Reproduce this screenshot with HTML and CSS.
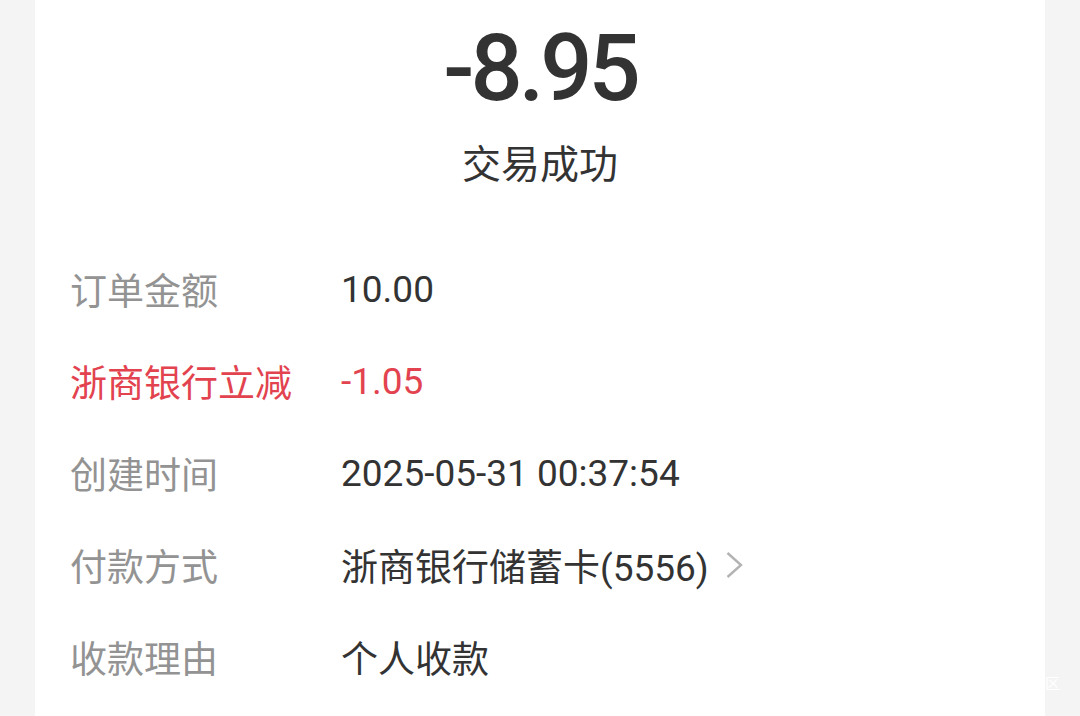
FILE: index.html
```html
<!DOCTYPE html>
<html lang="zh-CN">
<head>
    <meta charset="UTF-8">
    <meta name="viewport" content="width=device-width, initial-scale=1.0">
    <title>账单详情</title>
    <link rel="stylesheet" href="styles.css">
</head>
<body>
    <main class="card">
        <section class="summary">
            <p class="amount">-8.95</p>
            <p class="status">交易成功</p>
        </section>
        <section class="details">
            <div class="row">
                <span class="label">订单金额</span>
                <span class="value">10.00</span>
            </div>
            <div class="row discount">
                <span class="label">浙商银行立减</span>
                <span class="value">-1.05</span>
            </div>
            <div class="row">
                <span class="label">创建时间</span>
                <span class="value">2025-05-31 00:37:54</span>
            </div>
            <div class="row">
                <span class="label">付款方式</span>
                <span class="value link">浙商银行储蓄卡(5556)
                    <svg class="arrow" viewBox="0 0 17 26" width="17" height="26">
                        <path d="M1.5 1 L15 13 L1.5 25" fill="none" stroke="#b3b3b3" stroke-width="2.4"/>
                    </svg>
                </span>
            </div>
            <div class="row">
                <span class="label">收款理由</span>
                <span class="value">个人收款</span>
            </div>
        </section>
    </main>
    <span class="watermark">区</span>
</body>
</html>
```

FILE: styles.css
```css
html {
    box-sizing: border-box;
    font-family: Roboto, "Noto Sans CJK SC", sans-serif;
}

*,
*:before,
*:after {
    box-sizing: inherit;
}

body {
    margin: 0;
    min-height: 100vh;
    background-color: #f4f4f4;
    overflow: hidden;
}

p {
    margin: 0;
}

.card {
    margin: 0 35px;
    min-height: 100vh;
    background-color: #fff;
}

.summary {
    display: flex;
    flex-direction: column;
    align-items: center;
    padding-top: 14px;
}

.amount {
    font-size: 92px;
    font-weight: 500;
    line-height: 110px;
    letter-spacing: -4px;
    color: #333;
}

.status {
    font-size: 39px;
    line-height: 50px;
    color: #333;
    margin-top: 16px;
}

.details {
    padding: 53px 35px 0;
}

.row {
    display: grid;
    grid-template-columns: 271px 1fr;
    align-items: center;
    height: 92px;
    font-size: 37px;
}

.label {
    color: #939393;
}

.value {
    color: #333;
}

.discount .label,
.discount .value {
    color: #e2434f;
}

.link {
    display: flex;
    align-items: center;
}

.arrow {
    margin-left: 17px;
}

.watermark {
    position: absolute;
    left: 1045px;
    top: 672px;
    font-size: 15px;
    color: #fff;
}
```
